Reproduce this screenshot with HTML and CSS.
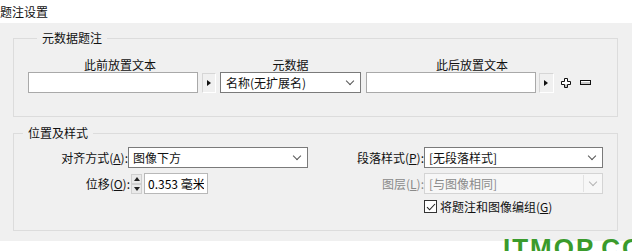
FILE: index.html
```html
<html lang="zh-CN">
<head>
    <meta charset="UTF-8">
    <title>题注设置</title>
    <link rel="stylesheet" href="styles.css">
</head>
<body>
    <div class="title">题注设置</div>
    <div class="panel">
        <fieldset class="group meta">
            <legend>元数据题注</legend>
            <div class="meta-row">
                <div class="col">
                    <div class="col-label">此前放置文本</div>
                    <div class="col-ctrl">
                        <input type="text" class="text wide">
                        <span class="arrow-btn"><i></i></span>
                    </div>
                </div>
                <div class="col">
                    <div class="col-label">元数据</div>
                    <div class="col-ctrl">
                        <div class="combo meta-combo"><span>名称(无扩展名)</span><span class="drop"><b class="chev"></b></span></div>
                    </div>
                </div>
                <div class="col">
                    <div class="col-label">此后放置文本</div>
                    <div class="col-ctrl">
                        <input type="text" class="text wide after">
                        <span class="arrow-btn second"><i></i></span>
                        <svg class="icon plus" width="10" height="10" viewBox="0 0 10 10">
                            <path d="M3.5 0.5h3v3h3v3h-3v3h-3v-3h-3v-3h3z" fill="#fff" stroke="#111"/>
                            <path d="M4 6.5v2.5h2v-2.5" fill="#bbb"/>
                        </svg>
                        <svg class="icon minus" width="11" height="5" viewBox="0 0 11 5">
                            <rect x="0.5" y="0.5" width="10" height="4" fill="#c8c8c8" stroke="#111"/>
                            <rect x="1" y="1" width="9" height="1" fill="#fff"/>
                        </svg>
                    </div>
                </div>
            </div>
        </fieldset>

        <fieldset class="group place">
            <legend>位置及样式</legend>
            <div class="place-grid">
                <label class="lbl">对齐方式(<u>A</u>):</label>
                <div class="combo"><span>图像下方</span><span class="drop"><b class="chev"></b></span></div>
                <label class="lbl">段落样式(<u>P</u>):</label>
                <div class="combo"><span>[无段落样式]</span><span class="drop"><b class="chev"></b></span></div>

                <label class="lbl shift">位移(<u>O</u>):</label>
                <div class="offset">
                    <span class="spin">
                        <span class="spin-up"></span>
                        <span class="spin-down"></span>
                    </span>
                    <input type="text" class="text num" value="0.353 毫米">
                </div>
                <label class="lbl off">图层(<u>L</u>):</label>
                <div class="combo disabled"><span>[与图像相同]</span><span class="drop"><b class="chev"></b></span></div>

                <div></div>
                <div></div>
                <div></div>
                <label class="check"><span class="box"><svg width="10" height="10" viewBox="0 0 10 10"><path d="M1 5.2l2.6 2.6L9 2" fill="none" stroke="#222" stroke-width="1.1"/></svg></span>将题注和图像编组(<u>G</u>)</label>
            </div>
        </fieldset>
    </div>
    <div class="mark">ITMOP.COM</div>
</body>
</html>
```

FILE: styles.css
```css
html, body {
    margin: 0;
    width: 632px;
    height: 251px;
    overflow: hidden;
    background: #fff;
}

body {
    position: relative;
    font-family: "Noto Sans CJK SC", "Liberation Sans", sans-serif;
    font-size: 12px;
    line-height: 14px;
    color: #111;
}

.title {
    height: 23px;
    line-height: 23px;
}

.panel {
    background: #f0f0f0;
    height: 218px;
    padding-top: 8px;
    box-sizing: border-box;
}

/* group boxes */
.group {
    margin: 0 14px 0 13px;
    border: 1px solid #dcdcdc;
    padding: 0;
    min-width: 0;
}

.group legend {
    margin-left: 9px;
    padding: 0 5px;
    line-height: 14px;
}

.meta {
    padding: 13px 0 23px 14px;
}

.place {
    margin-top: 9px;
}

/* metadata row */
.meta-row {
    display: flex;
    align-items: flex-end;
}

.col-label {
    text-align: center;
    height: 14px;
    padding-right: 8px;
}

.col-ctrl {
    display: flex;
    align-items: center;
}

.col:nth-child(2) .col-label {
    padding-right: 0;
}

.text {
    box-sizing: border-box;
    height: 21px;
    margin: 0;
    border: 1px solid #a9a9a9;
    background: #fff;
    font: inherit;
    padding: 0 3px;
    outline: none;
}

.wide {
    width: 170px;
}

.after {
    margin-left: 5px;
}

.arrow-btn {
    box-sizing: border-box;
    width: 14px;
    height: 20px;
    margin: 0 4px;
    border: 1px solid #d6d6d6;
    border-right-color: #fff;
    border-bottom-color: #fff;
    display: flex;
    align-items: center;
    padding-left: 4px;
}

.arrow-btn.second {
    margin: 0 0 0 3px;
    width: 15px;
}

.arrow-btn i {
    width: 0;
    height: 0;
    border-top: 3.5px solid transparent;
    border-bottom: 3.5px solid transparent;
    border-left: 4px solid #111;
}

.icon.plus {
    margin-left: 7px;
}

.icon.minus {
    margin-left: 9px;
}

/* combo boxes */
.combo {
    box-sizing: border-box;
    height: 21px;
    border: 1px solid #7a7a7a;
    background: #fff;
    display: flex;
    align-items: center;
    justify-content: space-between;
    padding-left: 4px;
}

.meta-combo {
    width: 141px;
    padding-left: 5px;
}

.drop {
    width: 18px;
    align-self: stretch;
    display: flex;
    align-items: center;
    justify-content: center;
    margin-right: 1px;
}

.chev {
    width: 5px;
    height: 5px;
    border-right: 1px solid #555;
    border-bottom: 1px solid #555;
    transform: rotate(45deg);
    margin-top: -3px;
}

.combo.disabled {
    border-color: #d4d4d4;
    background: #f7f7f7;
    color: #8a8a8a;
}

.combo.disabled .drop {
    border-left: 1px solid #e2e2e2;
    margin: 1px 0;
}

.combo.disabled .chev {
    border-color: #b4b4b4;
}

/* placement grid */
.place-grid {
    display: grid;
    grid-template-columns: 114px 180px 116px 179px;
    grid-template-rows: 21px 21px 14px;
    row-gap: 5px;
    padding: 7px 0 17px 0;
}

.lbl {
    text-align: right;
    line-height: 21px;
    white-space: nowrap;
}

.lbl.shift {
    margin-right: -2px;
}

.lbl.off {
    color: #8a8a8a;
}

.offset {
    display: flex;
    align-items: center;
    padding-left: 3px;
}

.spin {
    display: flex;
    flex-direction: column;
    width: 11px;
    height: 20px;
    margin-right: 2px;
}

.spin-up, .spin-down {
    flex: 1;
    box-sizing: border-box;
    border: 1px solid #cfcfcf;
    background: #e9e9e9;
    display: flex;
    align-items: center;
    justify-content: center;
}

.spin-up::before {
    content: "";
    border-left: 3px solid transparent;
    border-right: 3px solid transparent;
    border-bottom: 4px solid #222;
}

.spin-down::before {
    content: "";
    border-left: 3px solid transparent;
    border-right: 3px solid transparent;
    border-top: 4px solid #222;
}

.num {
    width: 64px;
    height: 21px;
    padding: 0 3px;
    border-color: #b8b8b8;
}

.check {
    display: flex;
    align-items: center;
    margin-top: 1px;
    white-space: nowrap;
}

.box {
    box-sizing: border-box;
    width: 13px;
    height: 13px;
    border: 1px solid #333;
    background: #fff;
    margin-right: 3px;
    display: flex;
    align-items: center;
    justify-content: center;
}

.box svg {
    display: block;
}

/* site watermark, cut by the bottom edge */
.mark {
    position: absolute;
    left: 503px;
    top: 233px;
    font-family: "Liberation Sans", sans-serif;
    font-weight: bold;
    font-size: 26px;
    line-height: 30px;
    letter-spacing: 2px;
    color: #3a9b2c;
}
```
